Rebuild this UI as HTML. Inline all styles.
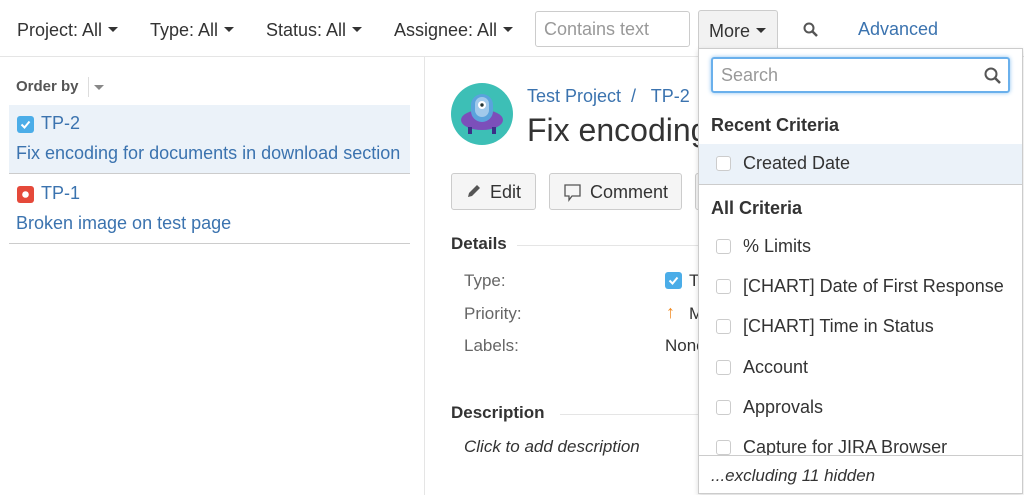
<!DOCTYPE html>
<html><head><style>
*{box-sizing:border-box;margin:0;padding:0}
body{width:1024px;height:495px;overflow:hidden;background:#fff;font-family:"Liberation Sans",sans-serif;color:#333;position:relative}
.a{position:absolute;white-space:nowrap}
.f{font-size:18px;color:#333;top:20px}
.car{display:inline-block;width:0;height:0;border-left:5px solid transparent;border-right:5px solid transparent;border-top:5px solid #333;vertical-align:middle;margin-left:6px;margin-top:-3px}
.blue{color:#3b73af}
.cb{position:absolute;width:15px;height:15px;border:1px solid #ccc;border-radius:3px;background:#fff}
.it{font-size:18px;color:#333}
</style></head><body>
<div class="a f" style="left:17px">Project: All<span class="car"></span></div>
<div class="a f" style="left:150px">Type: All<span class="car"></span></div>
<div class="a f" style="left:266px">Status: All<span class="car"></span></div>
<div class="a f" style="left:394px">Assignee: All<span class="car"></span></div>
<div class="a" style="left:535px;top:11px;width:155px;height:36px;border:1px solid #ccc;border-radius:3px;font-size:18px;color:#999;padding:7px 8px">Contains text</div>
<div class="a" style="left:698px;top:10px;width:80px;height:40px;border:1px solid #ccc;border-bottom:none;border-radius:3px 3px 0 0;background:#f2f2f2;font-size:18px;padding:10px 10px">More<span class="car"></span></div>
<svg class="a" style="left:802px;top:21px" width="18" height="18" viewBox="0 0 18 18"><circle cx="7" cy="7" r="4.5" fill="none" stroke="#555" stroke-width="2"/><path d="M10.5 10.5L15 15" stroke="#555" stroke-width="2.5"/></svg>
<div class="a blue" style="left:858px;top:19px;font-size:18px">Advanced</div>
<div class="a" style="left:0;top:56px;width:1024px;height:1px;background:#e5e5e5"></div>
<div class="a" style="left:424px;top:57px;width:1px;height:438px;background:#e5e5e5"></div>

<div class="a" style="left:16px;top:78px;font-size:15px;font-weight:bold;color:#555">Order by</div>
<div class="a" style="left:88px;top:77px;width:1px;height:20px;background:#ddd"></div>
<div class="a" style="left:94px;top:85px;border-left:5px solid transparent;border-right:5px solid transparent;border-top:5px solid #888"></div>
<div class="a" style="left:9px;top:105px;width:401px;height:69px;background:#ebf2f9;border-bottom:1px solid #ccc"></div>
<svg class="a" style="left:17px;top:116px" width="17" height="17"><rect width="17" height="17" rx="3" fill="#4bade8"/><path d="M4.5 8.5l3 3 5-6" stroke="#fff" stroke-width="2" fill="none"/></svg>
<div class="a blue" style="left:41px;top:113px;font-size:18px">TP-2</div>
<div class="a blue" style="left:16px;top:143px;font-size:18px">Fix encoding for documents in download section</div>
<svg class="a" style="left:17px;top:186px" width="17" height="17"><rect width="17" height="17" rx="3" fill="#e5493a"/><circle cx="8.5" cy="8.5" r="3.3" fill="#fff"/></svg>
<div class="a blue" style="left:41px;top:183px;font-size:18px">TP-1</div>
<div class="a blue" style="left:16px;top:213px;font-size:18px">Broken image on test page</div>
<div class="a" style="left:9px;top:243px;width:401px;height:1px;background:#ccc"></div>

<svg class="a" style="left:451px;top:83px" width="62" height="62" viewBox="0 0 62 62"><circle cx="31" cy="31" r="31" fill="#3dbfb6"/><ellipse cx="31" cy="37" rx="21" ry="10" fill="#7c4fba"/><rect x="20" y="11" width="22" height="28" rx="11" fill="#5aa3dc"/><rect x="24" y="14" width="14" height="20" rx="7" fill="#e6f0fa" opacity=".5"/><circle cx="31" cy="22" r="4" fill="#fff"/><circle cx="31" cy="22" r="1.7" fill="#233"/><rect x="17" y="44" width="4" height="7" fill="#3b2f88"/><rect x="41" y="44" width="4" height="7" fill="#3b2f88"/></svg>
<div class="a blue" style="left:527px;top:86px;font-size:18px">Test Project&nbsp; /&nbsp;&nbsp; TP-2</div>
<div class="a" style="left:527px;top:112px;font-size:32px;color:#333">Fix encoding</div>
<div class="a" style="left:451px;top:173px;width:85px;height:37px;border:1px solid #ccc;border-radius:3px;background:#f5f5f5;font-size:18px;padding:8px 0 0 38px">Edit</div>
<svg class="a" style="left:466px;top:183px" width="16" height="16"><path d="M2 14l1-4 8-8 3 3-8 8z" fill="#555"/></svg>
<div class="a" style="left:549px;top:173px;width:133px;height:37px;border:1px solid #ccc;border-radius:3px;background:#f5f5f5;font-size:18px;padding:8px 0 0 40px">Comment</div>
<svg class="a" style="left:563px;top:183px" width="20" height="20"><path d="M2 2h15v11H9l-3 4v-4H2z" fill="none" stroke="#555" stroke-width="1.3"/></svg>
<div class="a" style="left:695px;top:173px;width:10px;height:37px;border:1px solid #ccc;border-radius:3px;background:#f5f5f5"></div>
<div class="a" style="left:451px;top:234px;font-size:17px;font-weight:bold">Details</div>
<div class="a" style="left:517px;top:245px;width:190px;height:1px;background:#e5e5e5"></div>
<div class="a" style="left:464px;top:271px;font-size:17px;color:#666">Type:</div>
<div class="a" style="left:464px;top:304px;font-size:17px;color:#666">Priority:</div>
<div class="a" style="left:464px;top:336px;font-size:17px;color:#666">Labels:</div>
<svg class="a" style="left:665px;top:272px" width="17" height="17"><rect width="17" height="17" rx="3" fill="#4bade8"/><path d="M4.5 8.5l3 3 5-6" stroke="#fff" stroke-width="2" fill="none"/></svg>
<div class="a" style="left:689px;top:271px;font-size:17px">T</div>
<div class="a" style="left:666px;top:302px;font-size:18px;color:#f08c26;font-weight:bold">&#8593;</div>
<div class="a" style="left:689px;top:304px;font-size:17px">M</div>
<div class="a" style="left:665px;top:336px;font-size:17px">None</div>
<div class="a" style="left:451px;top:403px;font-size:17px;font-weight:bold">Description</div>
<div class="a" style="left:560px;top:414px;width:150px;height:1px;background:#e5e5e5"></div>
<div class="a" style="left:464px;top:437px;font-size:17px;font-style:italic">Click to add description</div>

<div class="a" style="left:698px;top:48px;width:325px;height:446px;background:#fff;border:1px solid #ccc;box-shadow:0 2px 5px rgba(0,0,0,.15);overflow:hidden">
  <div class="a" style="left:12px;top:8px;width:299px;height:36px;border:2px solid #6ab0ec;border-radius:3px;box-shadow:0 0 4px #8ec3f0;font-size:18px;color:#999;padding:6px 8px">Search</div>
  <svg class="a" style="left:284px;top:17px" width="20" height="20"><circle cx="8" cy="8" r="5.5" fill="none" stroke="#555" stroke-width="2"/><path d="M12 12l5 5" stroke="#555" stroke-width="2.5"/></svg>
  <div class="a" style="left:12px;top:66px;font-size:18px;font-weight:bold">Recent Criteria</div>
  <div class="a" style="left:0;top:95px;width:325px;height:41px;background:#ebf2f9;border-bottom:1px solid #ccc"></div>
  <div class="cb" style="left:17px;top:107px"></div><div class="a it" style="left:44px;top:104px">Created Date</div>
  <div class="a" style="left:12px;top:149px;font-size:18px;font-weight:bold">All Criteria</div>
  <div class="cb" style="left:17px;top:190px"></div><div class="a it" style="left:44px;top:187px">% Limits</div>
  <div class="cb" style="left:17px;top:230px"></div><div class="a it" style="left:44px;top:227px">[CHART] Date of First Response</div>
  <div class="cb" style="left:17px;top:270px"></div><div class="a it" style="left:44px;top:267px">[CHART] Time in Status</div>
  <div class="cb" style="left:17px;top:311px"></div><div class="a it" style="left:44px;top:308px">Account</div>
  <div class="cb" style="left:17px;top:351px"></div><div class="a it" style="left:44px;top:348px">Approvals</div>
  <div class="cb" style="left:17px;top:391px"></div><div class="a it" style="left:44px;top:388px">Capture for JIRA Browser</div>
  <div class="a" style="left:0;top:406px;width:325px;height:40px;background:#fff;border-top:1px solid #ccc"></div>
  <div class="a" style="left:12px;top:417px;font-size:17px;font-style:italic">...excluding 11 hidden</div>
</div>
</body></html>
